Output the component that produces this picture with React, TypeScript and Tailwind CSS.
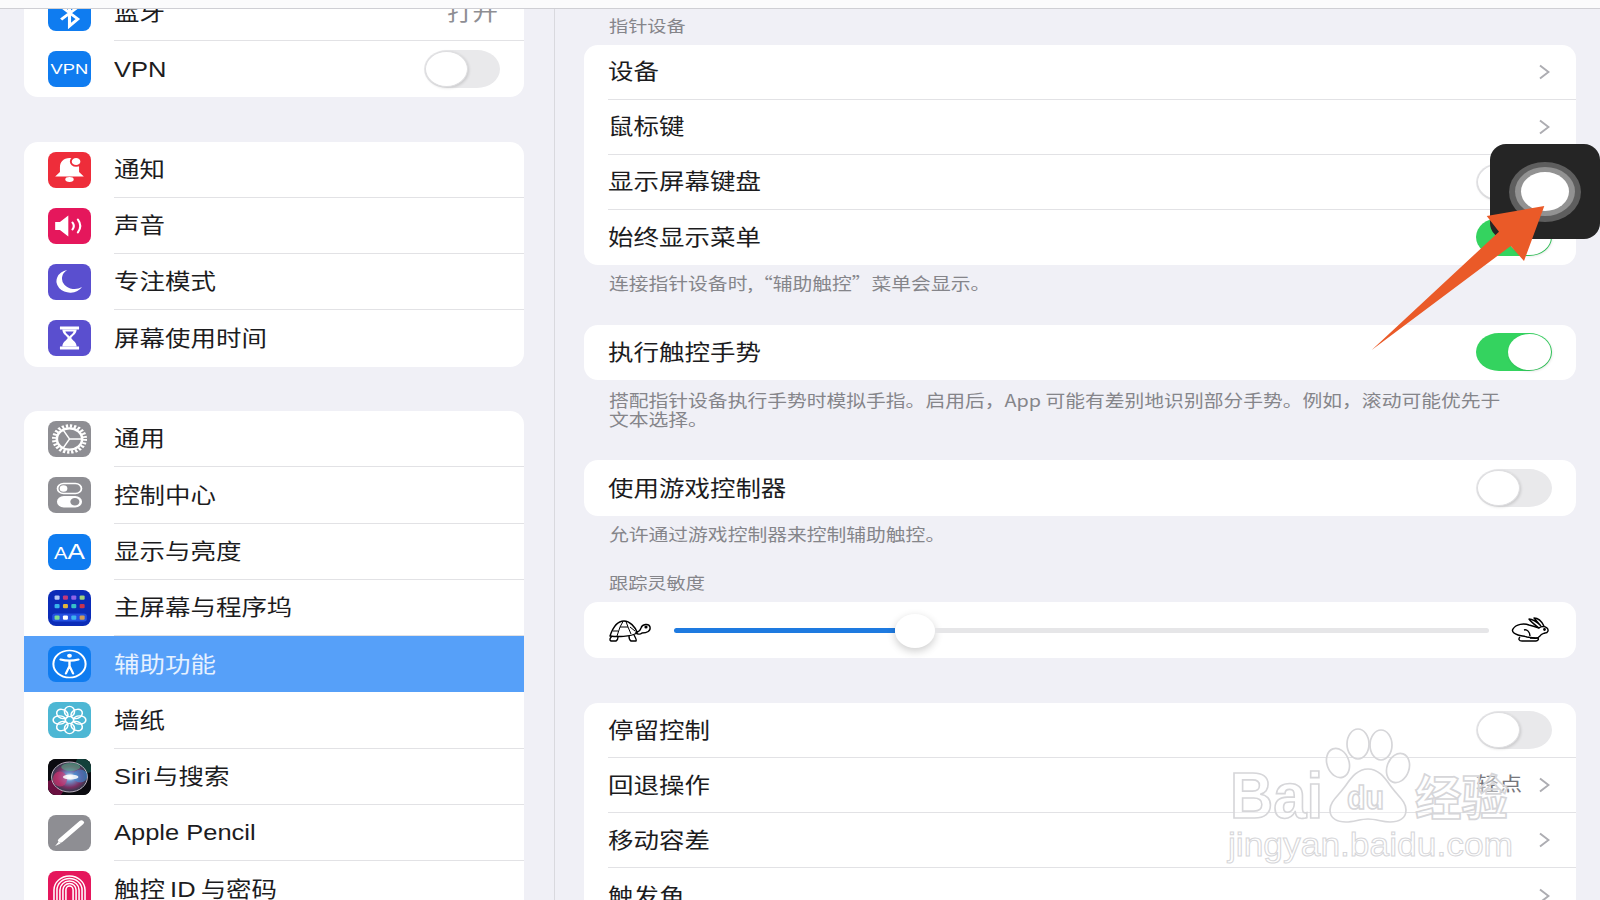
import type { ReactNode } from "react";

const Glyph = ({ children }: { children: ReactNode }) => (
  <svg viewBox="0 0 36 36" preserveAspectRatio="none" className="w-full h-full">
    {children}
  </svg>
);

const Label = ({ children, className = "" }: { children: ReactNode; className?: string }) => (
  <span className={`inline-block origin-left scale-x-[1.185] whitespace-nowrap text-[21.5px] leading-none ${className}`}>
    {children}
  </span>
);

const Note = ({ children }: { children: ReactNode }) => (
  <span className="block origin-left scale-x-[1.185] whitespace-nowrap text-[16.7px] leading-[19.5px] text-[#85858a] font-['Noto_Sans_CJK_SC',sans-serif]">
    {children}
  </span>
);

const Heading = ({ children }: { children: ReactNode }) => (
  <span className="block origin-left scale-x-[1.185] whitespace-nowrap text-[16.2px] leading-5 text-[#85858a]">
    {children}
  </span>
);

const Toggle = ({ on = false }: { on?: boolean }) => (
  <div className={`flex h-[38px] w-[76px] shrink-0 rounded-[23px/19px] p-px ${on ? "justify-end bg-[#34d35f]" : "justify-start bg-[#e9e9eb]"}`}>
    <div className={`h-9 w-[43px] rounded-[50%] bg-white shadow-[1px_1px_3px_rgba(0,0,0,0.14)] ${on ? "" : "border border-[#dedee0]"}`} />
  </div>
);

const Chevron = () => (
  <svg width="11" height="16" viewBox="0 0 11 16" fill="none" stroke="#adadb2" strokeWidth="2" className="mr-[2px] shrink-0">
    <path d="M1 1.5 9.5 8 1 14.5" />
  </svg>
);

const TurtleIcon = () => (
  <svg width="60" height="36" viewBox="0 0 60 36" fill="none" stroke="#000" strokeWidth="1.4" strokeLinejoin="round" className="shrink-0">
    <path d="M10 24C13 15 18 9 24 9c6 0 11 6 13 11v1c-7 4-20 4-27 3z" />
    <path d="M17 24l3-9h8l3 7M20 15l3-5.500M28 15l-2-5.500M13 19h5M30 15l5 4" strokeWidth="1" />
    <path d="M36 20c3 0 4-1 5-4 1-4 8-5 9-1s-3 6-8 6c-2 2-5 1-6 0z" />
    <circle cx="46" cy="15" r="0.900" fill="#000" />
    <path d="M12 24c-2 2-3 4-1 5h5c2-1 2-3 2-4M29 24c0 2 0 4 2 5h5c1-1-1-4-2-6" />
  </svg>
);

const RabbitIcon = () => (
  <svg width="60" height="36" viewBox="0 0 60 36" fill="none" stroke="#000" strokeWidth="1.4" strokeLinejoin="round" className="shrink-0">
    <path d="M13 17c3-5 11-6 16-4 4 1 7 2 10 3 2-2 6-2 8 0s1 5-2 5c-3 1-4 1-5 3-2 2-4 3-6 2l-7-1c-3-1-6-1-9-2-3-1-7-3-5-6z" />
    <path d="M39 16c-4-3-8-6-10-9 4 0 8 3 12 7M41 14c-3-3-5-6-7-8 4 0 8 4 10 8" />
    <path d="M20 25c-2 2-1 4 2 4h8M30 26h8c1 1 0 3-2 3h-8M24 18c3-1 6 2 6 6" />
    <circle cx="44.500" cy="17.500" r="0.700" fill="#000" />
  </svg>
);

const BluetoothIcon = () => (
  <Glyph>
    <path d="M11 11.5 25 24l-7 7V5l7 7-14 12.5" fill="none" stroke="#fff" strokeWidth="2.6" />
  </Glyph>
);

const BellIcon = () => (
  <Glyph>
    <path d="M18 6c-5 0-8 4-8 9v5l-4 4.5h24l-4-4.5v-5c0-5-3-9-8-9z" fill="#fff" />
    <ellipse cx="18" cy="27.5" rx="3.5" ry="2.4" fill="#fff" />
    <circle cx="23.5" cy="9.5" r="4.4" fill="#fff" stroke="#ee2d3a" strokeWidth="1.6" />
  </Glyph>
);

const SoundIcon = () => (
  <Glyph>
    <path d="M6 14h4l7-6.5v21L10 22H6z" fill="#fff" />
    <path d="M20.5 14.5c1.4 2.2 1.4 4.8 0 7M25 11.5c2.5 4 2.5 9 0 13" fill="none" stroke="#fff" strokeWidth="1.8" strokeLinecap="round" />
  </Glyph>
);

const MoonIcon = () => (
  <Glyph>
    <path d="M16 6A11.5 11.5 0 1 0 28.5 23 10.5 10.5 0 0 1 16 6z" fill="#fff" />
  </Glyph>
);

const HourglassIcon = () => (
  <Glyph>
    <path d="M10 6.5h16v3H10zM10 26.5h16v3H10z" fill="#fff" />
    <path d="M12 9.5h12c0 4.5-4 6.5-4.5 8.500 .5 2 4.500 4 4.500 8.500H12c0-4.500 4-6.500 4.500-8.500-.5-2-4.500-4-4.500-8.500z" fill="#fff" />
    <path d="M14.500 11.500h7c-.5 2-2.500 3.500-3.500 5-1-1.500-3-3-3.500-5z" fill="#5a4fcf" />
  </Glyph>
);

const GearIcon = () => (
  <Glyph>
    <circle cx="18" cy="18" r="13" fill="none" stroke="#fff" strokeWidth="3.400" strokeDasharray="1.900 1.500" />
    <circle cx="18" cy="18" r="10.600" fill="none" stroke="#fff" strokeWidth="2.200" />
    <path d="M18 18 28 18M18 18 13 9.500M18 18 13 26.500" stroke="#fff" strokeWidth="1.400" />
  </Glyph>
);

const ControlIcon = () => (
  <Glyph>
    <rect x="8" y="6.500" width="20" height="10" rx="5" fill="none" stroke="#fff" strokeWidth="1.500" />
    <circle cx="13" cy="11.500" r="3.200" fill="#fff" />
    <rect x="7.500" y="19" width="21" height="11.500" rx="5.700" fill="#fff" />
    <circle cx="22.500" cy="24.700" r="3.800" fill="#8e8e93" />
  </Glyph>
);

const HomeIcon = () => {
  const rows = [
    { y: 5.500, fills: ["#b6c8f5", "#c23a7a", "#8f63e8", "#9fd07c"] },
    { y: 14, fills: ["#39b3ea", "#e0b33c", "#36c0c8", "#c8344f"] },
    { y: 25.500, fills: ["#7fdc8e", "#ffffff", "#3cb4ee", "#d09a58"] },
  ];
  return (
    <Glyph>
      <rect x="3.500" y="23.500" width="29" height="8" rx="2.500" fill="#2350e0" />
      {rows.map((row) =>
        row.fills.map((fill, i) => (
          <rect key={`${row.y}-${i}`} x={5.500 + i * 7} y={row.y} width="4.200" height="4.200" rx="1" fill={fill} />
        ))
      )}
    </Glyph>
  );
};

const AccessIcon = () => (
  <Glyph>
    <circle cx="18" cy="18" r="13.500" fill="none" stroke="#fff" strokeWidth="1.700" />
    <circle cx="18" cy="9.800" r="2" fill="#fff" />
    <path d="M10.500 13.500c5 1.500 10 1.500 15 0M18 14.500V20M18 20l-3 7.500M18 20l3 7.500" fill="none" stroke="#fff" strokeWidth="2" strokeLinecap="round" />
  </Glyph>
);

const FlowerIcon = () => (
  <Glyph>
    {[0, 45, 90, 135, 180, 225, 270, 315].map((a) => (
      <ellipse key={a} cx="18" cy="9.500" rx="4.200" ry="5.200" fill="none" stroke="#fff" strokeWidth="1.300" transform={`rotate(${a} 18 18)`} />
    ))}
    <circle cx="18" cy="18" r="3.500" fill="none" stroke="#fff" strokeWidth="1.200" />
  </Glyph>
);

const SiriIcon = () => (
  <Glyph>
    <defs>
      <radialGradient id="siri-glow">
        <stop offset="0" stopColor="#f3fbff" />
        <stop offset="0.3" stopColor="#6d8fc8" />
        <stop offset="0.7" stopColor="#7a2f62" />
        <stop offset="1" stopColor="#2b3a4a" />
      </radialGradient>
    </defs>
    <rect width="36" height="36" fill="#0b0b10" />
    <ellipse cx="4" cy="30" rx="9" ry="9" fill="#6a1040" />
    <ellipse cx="32" cy="5" rx="9" ry="9" fill="#12403a" />
    <circle cx="18" cy="18" r="15" fill="url(#siri-glow)" stroke="#d8c8d8" strokeWidth="0.800" />
    <ellipse cx="10" cy="20" rx="6" ry="7.500" fill="#d8336f" opacity="0.6" />
    <ellipse cx="27" cy="17" rx="6" ry="6.500" fill="#3a8fd8" opacity="0.6" />
    <ellipse cx="19" cy="8" rx="8" ry="4" fill="#4fb88a" opacity="0.55" />
    <ellipse cx="19" cy="18" rx="6.500" ry="2.400" fill="#fff" opacity="0.85" />
  </Glyph>
);

const PencilIcon = () => (
  <Glyph>
    <path d="M28 7.500 10.500 25.500" stroke="#fff" strokeWidth="4.400" strokeLinecap="round" />
    <path d="M9 26.500 6 31l4.500-2.500z" fill="#fff" />
  </Glyph>
);

const TouchIcon = () => (
  <Glyph>
    {[3, 5.500, 8, 10.500, 13].map((r) => (
      <path key={r} d={`M${18 - r} 36V19a${r} ${r + 1} 0 0 1 ${r * 2} 0V36`} fill="none" stroke="#fff" strokeWidth="1.300" />
    ))}
  </Glyph>
);

type SideItem = {
  label: string;
  icon: ReactNode;
  bg: string;
  value?: string;
  toggle?: boolean;
  active?: boolean;
};

const groups: SideItem[][] = [
  [
    { label: "蓝牙", icon: <BluetoothIcon />, bg: "bg-[#0f7cf0]", value: "打开" },
    {
      label: "VPN",
      icon: <span className="block w-full scale-x-[1.185] text-center text-[15.500px] leading-9 text-white">VPN</span>,
      bg: "bg-[#0f7cf0]",
      toggle: true,
    },
  ],
  [
    { label: "通知", icon: <BellIcon />, bg: "bg-[#ee2d3a]" },
    { label: "声音", icon: <SoundIcon />, bg: "bg-[#e5175c]" },
    { label: "专注模式", icon: <MoonIcon />, bg: "bg-[#5a4fcf]" },
    { label: "屏幕使用时间", icon: <HourglassIcon />, bg: "bg-[#5a4fcf]" },
  ],
  [
    { label: "通用", icon: <GearIcon />, bg: "bg-[#8e8e93]" },
    { label: "控制中心", icon: <ControlIcon />, bg: "bg-[#8e8e93]" },
    {
      label: "显示与亮度",
      icon: <span className="block w-full scale-x-[1.185] text-center text-[22px] leading-9 text-white"><span className="text-[17px]">A</span>A</span>,
      bg: "bg-[#0f7cf0]",
    },
    { label: "主屏幕与程序坞", icon: <HomeIcon />, bg: "bg-[#0b2cb8]" },
    { label: "辅助功能", icon: <AccessIcon />, bg: "bg-[#0f7cf0]", active: true },
    { label: "墙纸", icon: <FlowerIcon />, bg: "bg-[#4db7d4]" },
    { label: "Siri\u200a与搜索", icon: <SiriIcon />, bg: "bg-black" },
    { label: "Apple Pencil", icon: <PencilIcon />, bg: "bg-[#8e8e93]" },
    { label: "触控\u2009ID\u2009与密码", icon: <TouchIcon />, bg: "bg-[#e5175c]" },
  ],
];

const Sidebar = () => (
  <aside className="w-[555px] shrink-0 overflow-hidden border-r border-[#d9d9de] pl-6 pr-[30px]">
    <div className="-mt-[24.500px] flex flex-col gap-[44.500px]">
      {groups.map((group) => (
        <div key={group[0].label} className="overflow-hidden rounded-[14px] bg-white">
          {group.map((item, i) => (
            <div key={item.label} className={`flex h-[56.250px] items-center pl-6 ${item.active ? "bg-[#56a0f9]" : ""}`}>
              <div className={`h-9 w-[43px] shrink-0 overflow-hidden rounded-[8px] ${item.bg}`}>{item.icon}</div>
              <div className={`ml-[22.500px] flex h-full flex-1 items-center justify-between pr-6 ${i < group.length - 1 && !item.active ? "border-b border-[#e2e2e5]" : ""}`}>
                <Label className={`pt-[3px] ${item.active ? "text-[#e6f1ff]" : "text-[#1c1c1e]"}`}>{item.label}</Label>
                {item.value && (
                  <span className="mr-[2px] origin-right scale-x-[1.185] pt-[3px] text-[21.500px] leading-none text-[#8e8e93]">{item.value}</span>
                )}
                {item.toggle && <Toggle />}
              </div>
            </div>
          ))}
        </div>
      ))}
    </div>
  </aside>
);

const Row = ({ label, last, children }: { label: string; last?: boolean; children?: ReactNode }) => (
  <div className="flex h-[55.100px] pl-6">
    <div className={`flex flex-1 items-center justify-between pr-6 ${last ? "" : "border-b border-[#e2e2e5]"}`}>
      <Label className="pt-[3px] text-[#1c1c1e]">{label}</Label>
      {children}
    </div>
  </div>
);

const Detail = () => (
  <main className="min-w-0 flex-1 overflow-hidden pl-[29px] pr-6">
    <div className="mb-[1.500px] flex h-[34px] items-center pl-[25px]">
      <Heading>指针设备</Heading>
    </div>
    <div className="overflow-hidden rounded-[14px] bg-white">
      <Row label="设备"><Chevron /></Row>
      <Row label="鼠标键"><Chevron /></Row>
      <Row label="显示屏幕键盘"><Toggle /></Row>
      <Row label="始终显示菜单" last><Toggle on /></Row>
    </div>
    <div className="mb-[22px] flex h-[38px] items-center pl-[25px]">
      <Note>连接指针设备时,“辅助触控”菜单会显示。</Note>
    </div>
    <div className="rounded-[14px] bg-white">
      <Row label="执行触控手势" last><Toggle on /></Row>
    </div>
    <div className="mb-[30.500px] mt-[11px] pl-[25px]">
      <Note>{"搭配指针设备执行手势时模拟手指。启用后\uff0cApp 可能有差别地识别部分手势。例如\uff0c滚动可能优先于"}</Note>
      <Note>文本选择。</Note>
    </div>
    <div className="rounded-[14px] bg-white">
      <Row label="使用游戏控制器" last><Toggle /></Row>
    </div>
    <div className="flex h-[38px] items-center pl-[25px]">
      <Note>允许通过游戏控制器来控制辅助触控。</Note>
    </div>
    <div className="mb-[9px] mt-[19px] pl-[25px]">
      <Heading>跟踪灵敏度</Heading>
    </div>
    <div className="flex h-14 items-center rounded-[14px] bg-white px-4">
      <TurtleIcon />
      <div className="ml-[14px] flex h-[34px] w-[815px] translate-y-px items-center">
        <div className="h-[5px] w-[221px] rounded-l-full bg-[#1e7ae0]" />
        <div className="h-[34px] w-10 shrink-0 rounded-[50%] bg-white shadow-[0_3px_9px_rgba(0,0,0,0.2)]" />
        <div className="h-[5px] flex-1 rounded-r-full bg-[#e6e6e8]" />
      </div>
      <div className="ml-auto">
        <RabbitIcon />
      </div>
    </div>
    <div className="mt-[45.500px] overflow-hidden rounded-[14px] bg-white">
      <Row label="停留控制"><Toggle /></Row>
      <Row label="回退操作">
        <div className="flex items-center gap-[17px]">
          <span className="origin-right scale-x-[1.185] text-[19.500px] leading-none text-[#77777c]">轻点</span>
          <Chevron />
        </div>
      </Row>
      <Row label="移动容差"><Chevron /></Row>
      <Row label="触发角" last><Chevron /></Row>
    </div>
  </main>
);

const Watermark = () => (
  <svg className="pointer-events-none absolute left-[1225px] top-[725px]" width="300" height="145" viewBox="0 0 300 145">
    <g fill="#ffffff66" stroke="#d6d6d9" strokeWidth="1.700">
      <ellipse cx="133" cy="19" rx="11" ry="15" />
      <ellipse cx="156" cy="20" rx="11" ry="15" />
      <ellipse cx="113" cy="38" rx="11" ry="15" transform="rotate(-20 113 38)" />
      <ellipse cx="173" cy="43" rx="11" ry="15" transform="rotate(20 173 43)" />
      <path d="M143 44c-12 0-18 11-25 20-6 8-13 13-13 21 0 9 8 12 16 12 8 0 14-3 22-3s14 3 22 3c8 0 16-3 16-12 0-8-7-13-13-21-7-9-13-20-25-20z" />
      <text x="5" y="93" fontFamily="'Liberation Sans', sans-serif" fontWeight="700" fontSize="64" textLength="93" lengthAdjust="spacingAndGlyphs">Bai</text>
      <text x="122" y="84" fontFamily="'Liberation Sans', sans-serif" fontWeight="700" fontSize="34" textLength="37" lengthAdjust="spacingAndGlyphs">du</text>
      <text x="190" y="90" fontFamily="'Noto Sans CJK SC', sans-serif" fontWeight="700" fontSize="48" textLength="93" lengthAdjust="spacingAndGlyphs">经验</text>
      <text x="3" y="131" strokeWidth="1" fontFamily="'Liberation Sans', sans-serif" fontSize="34" textLength="285" lengthAdjust="spacingAndGlyphs">jingyan.baidu.com</text>
    </g>
  </svg>
);

export default function App() {
  return (
    <div className="relative flex h-[900px] w-[1600px] flex-col overflow-hidden bg-[#f0f0f6] font-['Liberation_Sans','Noto_Sans_CJK_SC',sans-serif]">
      <div className="h-[9px] shrink-0 border-b border-[#cfcfd4] bg-[#fbfbfc]" />
      <div className="flex min-h-0 flex-1">
        <Sidebar />
        <Detail />
      </div>

      <div className="absolute right-0 top-[144px] flex h-[95px] w-[110px] items-center justify-center rounded-[16px] bg-[#252525]">
        <div className="flex h-[60px] w-[72px] items-center justify-center rounded-[50%] bg-[#5e5e5e]">
          <div className="flex h-[49px] w-[60px] items-center justify-center rounded-[50%] bg-[#929292]">
            <div className="h-[39px] w-12 rounded-[50%] bg-white" />
          </div>
        </div>
      </div>

      <svg className="pointer-events-none absolute inset-0" width="1600" height="900">
        <polygon points="1371.700,350 1499,231.700 1486.700,216 1544.300,206 1524,261 1510.700,246" fill="#ea5a28" />
      </svg>
      <Watermark />
    </div>
  );
}
